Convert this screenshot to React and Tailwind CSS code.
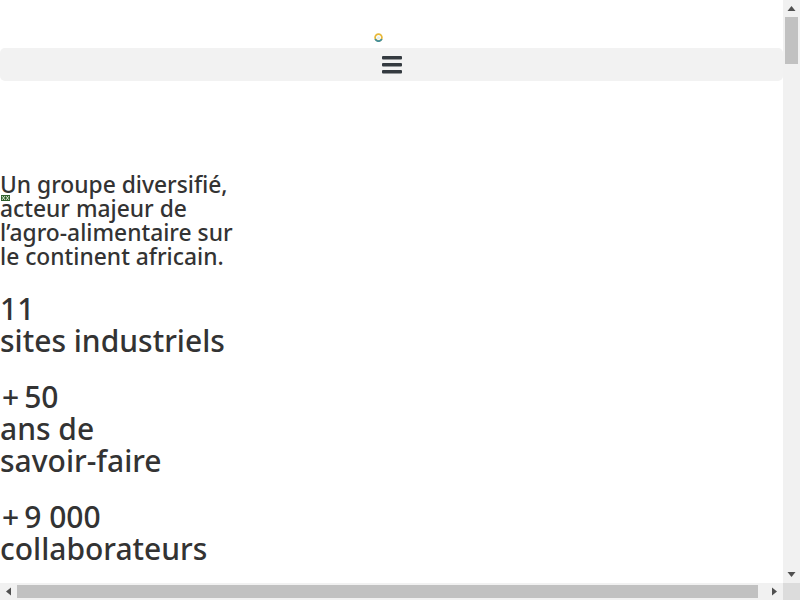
const stats = [
  { plus: false, lines: ["11", "sites industriels"] },
  { plus: true, lines: ["50", "ans de", "savoir-faire"] },
  { plus: true, lines: ["9 000", "collaborateurs"] },
];

const ScrollArrow = ({ points }) => (
  <svg viewBox="0 0 9 9" className="w-[9px] h-[9px]">
    <polygon points={points} fill="#505050" />
  </svg>
);

const App = () => {
  return (
    <div className="h-screen w-full flex flex-col overflow-hidden bg-white text-[#333333] font-['Noto_Sans',sans-serif]">
      <div className="flex-1 flex min-h-0">
        {/* Page content */}
        <div className="flex-1 min-w-0 overflow-hidden">
          <div className="h-12 flex justify-center items-end pb-[6px] pr-[26px]">
            <svg viewBox="0 0 9 9" className="w-[9px] h-[9px]">
              <circle cx="4.5" cy="4.5" r="3.4" fill="none" stroke="#e8b93a" strokeWidth="1.8" />
              <path d="M1.2 6 A3.6 3.6 0 0 0 7.8 6" fill="none" stroke="#3f8fa0" strokeWidth="1.8" />
              <circle cx="4.5" cy="4.7" r="1.5" fill="#dff0f0" />
            </svg>
          </div>

          <div className="h-[33px] bg-[#f2f2f2] rounded-[5px] flex items-center justify-center pl-px">
            <svg viewBox="0 0 20 19" className="w-5 h-[19px]">
              <rect x="0" y="1" width="20" height="3.6" rx="1" fill="#343a40" />
              <rect x="0" y="8" width="20" height="3.6" rx="1" fill="#343a40" />
              <rect x="0" y="15" width="20" height="3.6" rx="1" fill="#343a40" />
            </svg>
          </div>

          <div className="relative pt-[92px] w-[240px]">
            <svg viewBox="0 0 9 6" className="absolute left-[1px] top-[114px] w-[9px] h-[6px]">
              <rect width="9" height="6" fill="#2f5f2a" />
              <path d="M1 1 L4 5 M4 1 L1 5 M5 1 L8 5 M8 1 L5 5" stroke="#e6f2dc" strokeWidth="0.9" />
            </svg>
            <p className="text-[22.8px] leading-[24px] font-medium">
              Un groupe diversifié,
              <br />
              acteur majeur de
              <br />
              l’agro-alimentaire sur
              <br />
              le continent africain.
            </p>
            <div className="mt-[24px] flex flex-col gap-[24px]">
              {stats.map((stat) => (
                <div key={stat.lines[0]} className="text-[30px] leading-[32px] font-medium whitespace-nowrap">
                  {stat.lines.map((line, i) => (
                    <div key={line}>
                      {stat.plus && i === 0 && <span className="ml-[2px] mr-[5px]">+</span>}
                      {line}
                    </div>
                  ))}
                </div>
              ))}
            </div>
          </div>
        </div>

        {/* Vertical scrollbar */}
        <div className="w-[17px] shrink-0 bg-[#f1f1f1] flex flex-col items-center">
          <div className="h-[17px] flex items-center justify-center">
            <ScrollArrow points="4.5,2 8.5,7 0.5,7" />
          </div>
          <div className="w-[13px] h-[47px] bg-[#c1c1c1]" />
          <div className="flex-1" />
          <div className="h-[17px] flex items-center justify-center">
            <ScrollArrow points="0.5,2 8.5,2 4.5,7" />
          </div>
        </div>
      </div>

      {/* Horizontal scrollbar */}
      <div className="h-[17px] shrink-0 flex bg-[#f1f1f1]">
        <div className="w-[17px] flex items-center justify-center">
          <ScrollArrow points="2,4.5 7,0.5 7,8.5" />
        </div>
        <div className="w-[741px] h-[13px] my-[2px] bg-[#c1c1c1]" />
        <div className="flex-1" />
        <div className="w-[17px] flex items-center justify-center">
          <ScrollArrow points="2,0.5 7,4.5 2,8.5" />
        </div>
        <div className="w-[17px] bg-[#dcdcdc]" />
      </div>
    </div>
  );
};

export default App;
